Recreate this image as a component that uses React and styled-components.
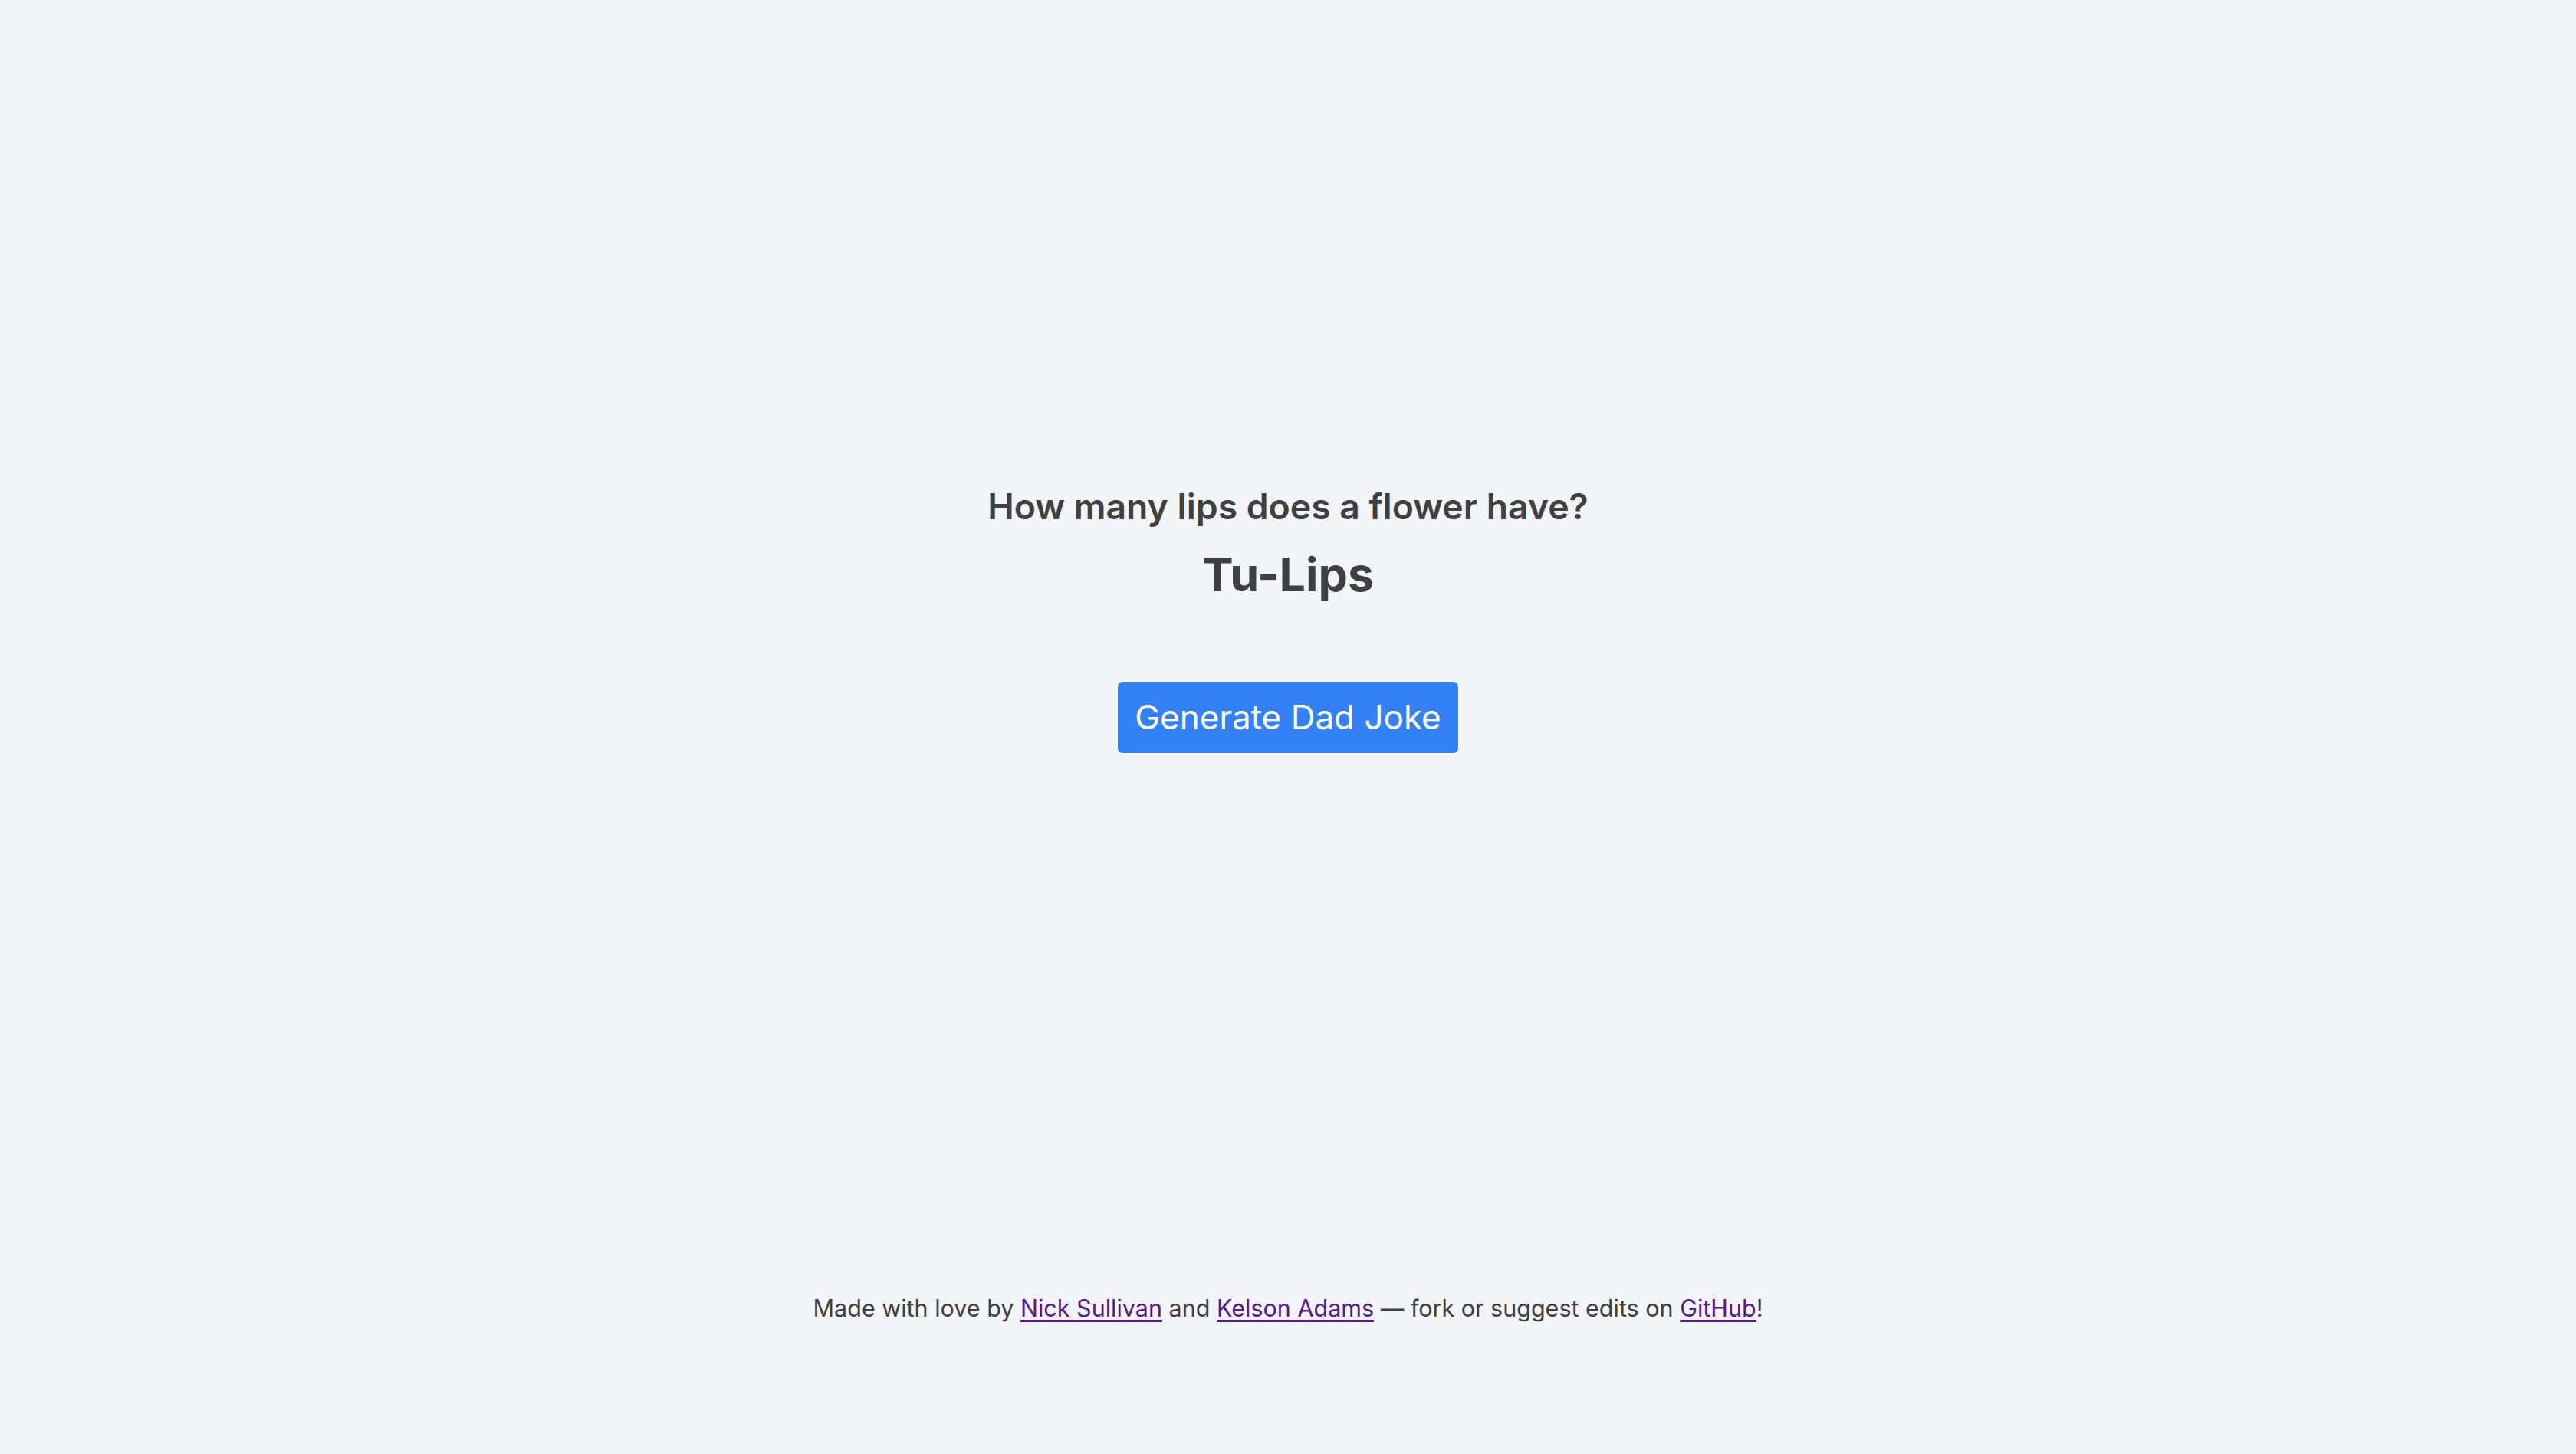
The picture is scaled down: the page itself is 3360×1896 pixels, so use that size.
import React from 'react';
import styled, { createGlobalStyle } from 'styled-components';

const GlobalStyle = createGlobalStyle`
    html, body {
        margin: 0;
        padding: 0;
        background: #f3f4f7;
    }
    body {
        font-family: Inter, "Noto Sans", "Liberation Sans", sans-serif;
        color: #404040;
    }
`

const Page = styled.div`
    width: 100%;
    min-height: 100vh;
    display: flex;
    flex-direction: column;
`

const Main = styled.main`
    flex: 1;
    display: flex;
    flex-direction: column;
    align-items: center;
    justify-content: center;
    padding-bottom: 70px;
`

const Question = styled.h2`
    margin: 0;
    font-size: 46.3px;
    font-weight: 600;
    line-height: 1.3;
    text-align: center;
`

const Answer = styled.h1`
    margin: 20px 0 0;
    font-size: 61px;
    font-weight: 700;
    line-height: 1.3;
    text-align: center;
`

const JokeButton = styled.button`
    margin-top: 97px;
    height: 97px;
    padding: 0 22px;
    background: #3381f6;
    color: #fff;
    border: 2px solid #fbfcfe;
    border-radius: 8px;
    font-family: inherit;
    font-size: 44px;
    font-weight: 400;
    cursor: pointer;
`

const Footer = styled.footer`
    padding: 0 0 168px;
    text-align: center;
    font-size: 30.5px;
    line-height: 44px;
`

const Link = styled.a`
    color: #551a8b;
    text-decoration: underline;
    text-underline-offset: 4px;
`

function App() {
    return (
        <Page>
            <GlobalStyle />
            <Main>
                <Question>How many lips does a flower have?</Question>
                <Answer>Tu-Lips</Answer>
                <JokeButton>Generate Dad Joke</JokeButton>
            </Main>
            <Footer>
                Made with love by <Link href="#">Nick Sullivan</Link> and{' '}
                <Link href="#">Kelson Adams</Link> — fork or suggest edits on{' '}
                <Link href="#">GitHub</Link>!
            </Footer>
        </Page>
    )
}

export default App;
